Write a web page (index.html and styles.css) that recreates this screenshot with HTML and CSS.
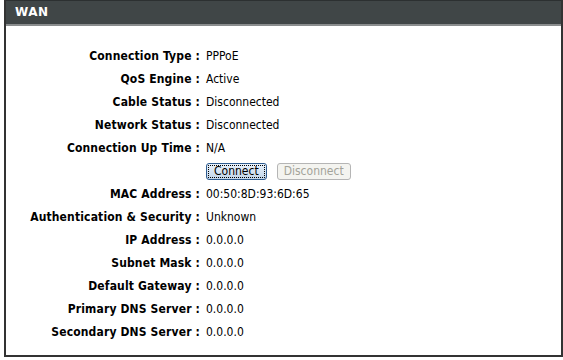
FILE: index.html
```html
<!DOCTYPE html>
<html>
<head>
	<title>WAN</title>
	<meta charset="utf-8">
	<link rel="stylesheet" href="styles.css">
</head>
<body>
	<div class="box">
		<h2 class="title">WAN</h2>
		<div class="info">
			<div class="label">Connection Type :</div><div class="value">PPPoE</div>
			<div class="label">QoS Engine :</div><div class="value">Active</div>
			<div class="label">Cable Status :</div><div class="value">Disconnected</div>
			<div class="label">Network Status :</div><div class="value">Disconnected</div>
			<div class="label">Connection Up Time :</div><div class="value">N/A</div>
			<div class="label"></div>
			<div class="value buttons">
				<button class="btn focus">Connect</button>
				<button class="btn" disabled>Disconnect</button>
			</div>
			<div class="label">MAC Address :</div><div class="value">00:50:8D:93:6D:65</div>
			<div class="label">Authentication &amp; Security :</div><div class="value">Unknown</div>
			<div class="label">IP Address :</div><div class="value">0.0.0.0</div>
			<div class="label">Subnet Mask :</div><div class="value">0.0.0.0</div>
			<div class="label">Default Gateway :</div><div class="value">0.0.0.0</div>
			<div class="label">Primary DNS Server :</div><div class="value">0.0.0.0</div>
			<div class="label">Secondary DNS Server :</div><div class="value">0.0.0.0</div>
		</div>
	</div>
</body>
</html>
```

FILE: styles.css
```css
body{
	margin: 0;
	background: #fff;
	font-family: 'DejaVu Sans Condensed', 'DejaVu Sans', sans-serif;
	font-size: 12px;
	color: #000;
}
.box{
	margin-left: 4px;
	width: 555px;
	height: 355px;
	border: 2px solid #333;
	border-top: none;
	box-sizing: content-box;
}
.title{
	margin: 0;
	height: 23px;
	background: #404647;
	border-top: 1px solid #2c3031;
	border-bottom: 2px solid #8a8d8e;
	color: #fff;
	font-family: Verdana, 'DejaVu Sans', sans-serif;
	font-size: 12px;
	font-weight: bold;
	line-height: 23px;
	padding-left: 9px;
	letter-spacing: 0.5px;
}
.info{
	display: grid;
	grid-template-columns: 194px 1fr;
	grid-auto-rows: 23px;
	padding-top: 19px;
}
.label{
	text-align: right;
	font-weight: bold;
	line-height: 23px;
	letter-spacing: 0.15px;
}
.value{
	padding-left: 6px;
	line-height: 23px;
}
.buttons{
	display: flex;
	align-items: center;
	gap: 10px;
}
.btn{
	font-family: 'DejaVu Sans Condensed', 'DejaVu Sans', sans-serif;
	font-size: 12px;
	height: 17px;
	padding: 0 6px;
	border: 1px solid #b5b5b5;
	border-radius: 3px;
	background: #f4f4f0;
	color: #a3a39a;
	line-height: 15px;
}
.btn.focus{
	padding: 0 7px;
	color: #000;
	border-color: #2f5c8f;
	background: linear-gradient(#e8f1fb, #c2d6ea);
	outline: 1px dotted #000;
	outline-offset: -3px;
}
```
